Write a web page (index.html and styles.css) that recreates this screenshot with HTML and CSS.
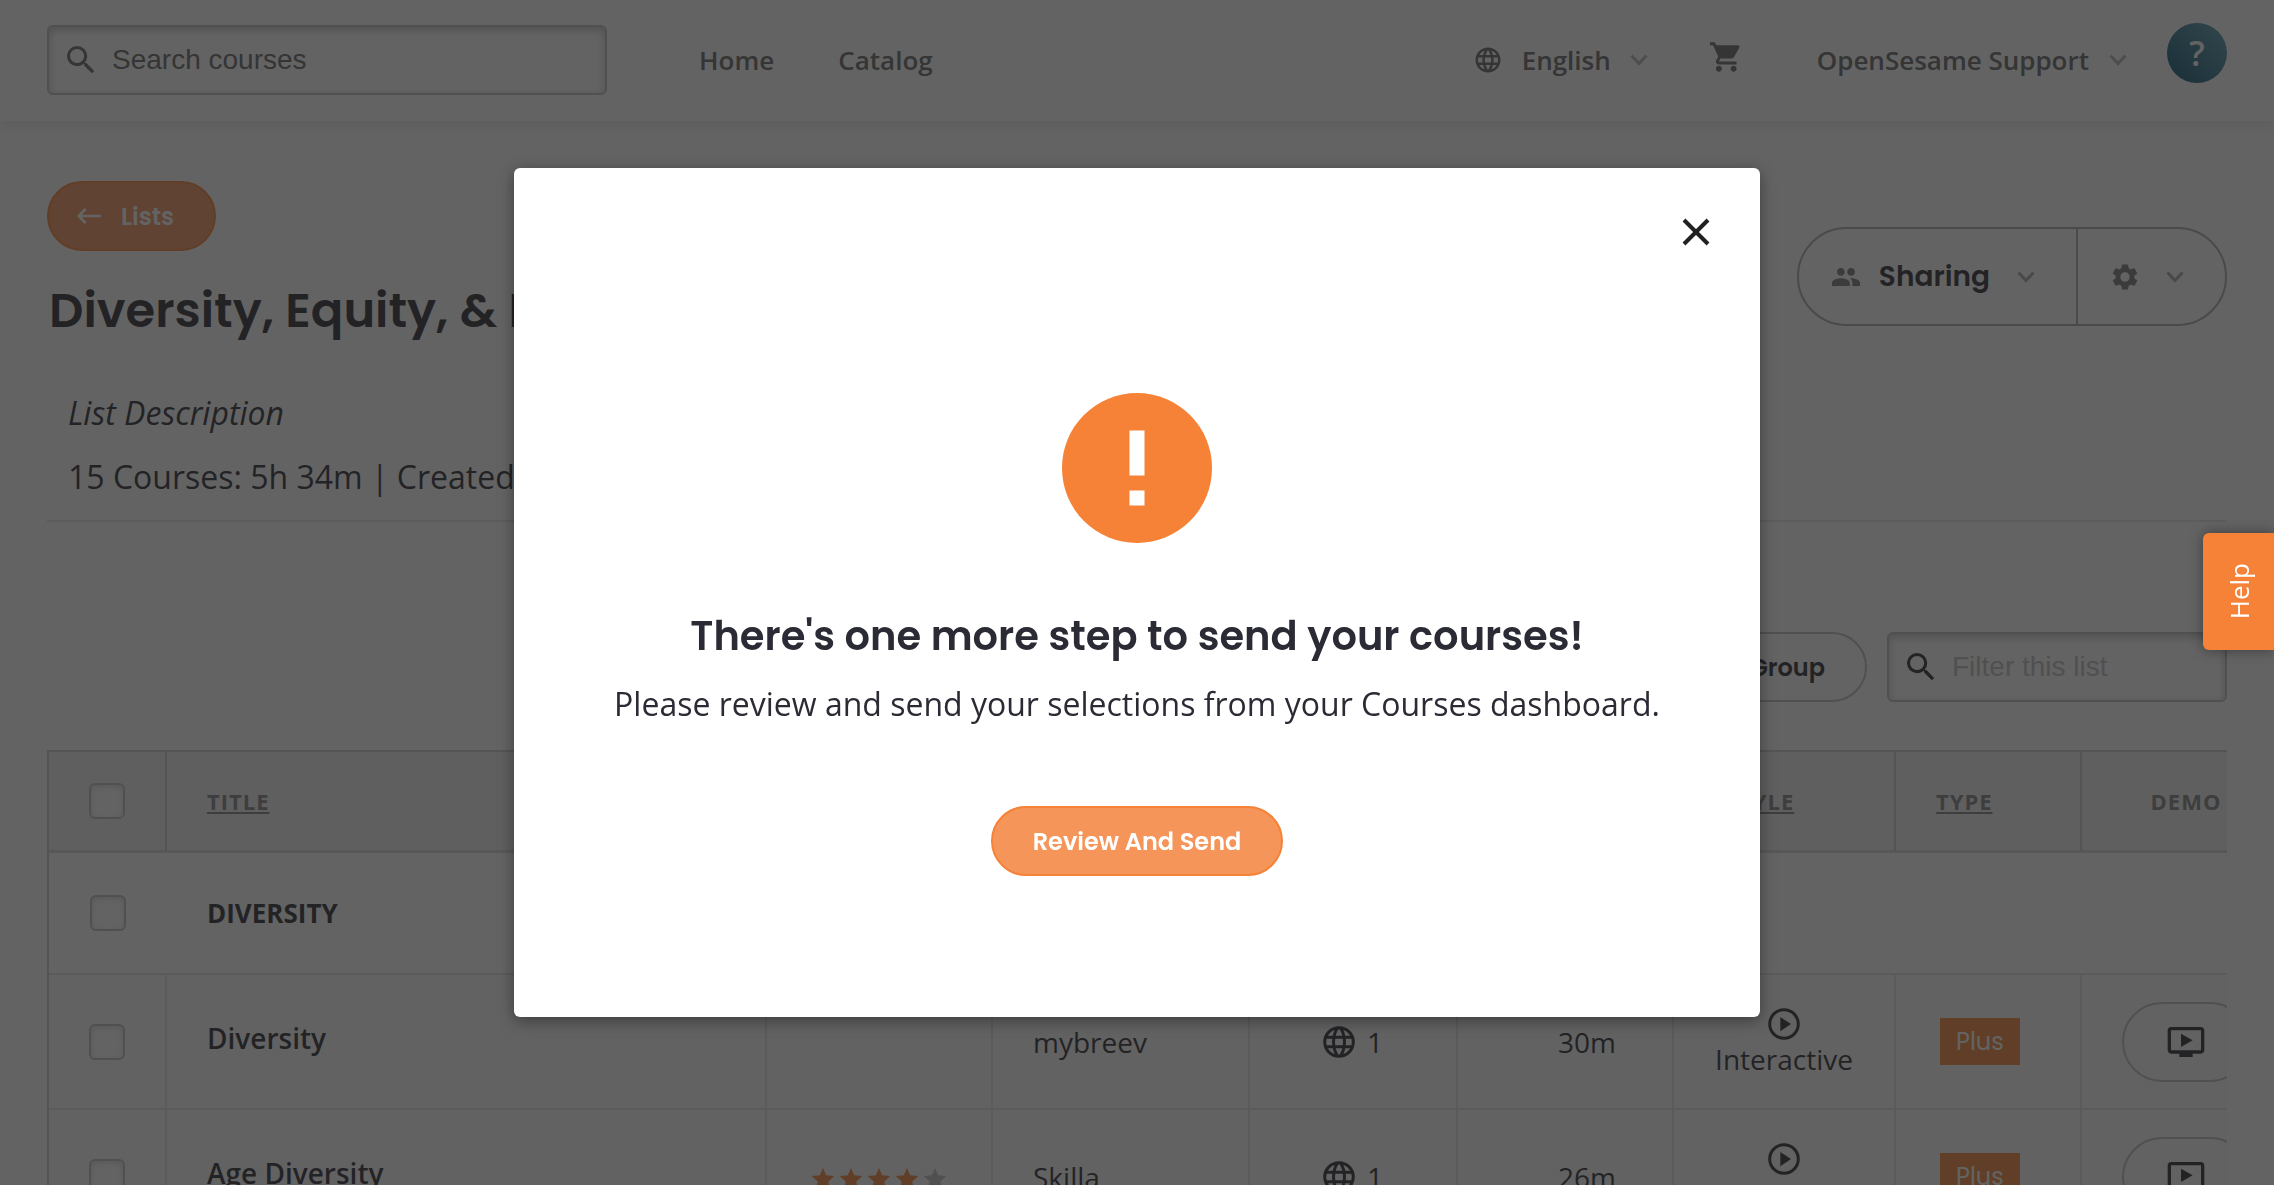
FILE: index.html
```html
<!DOCTYPE html>
<html lang="en">
<head>
  <meta charset="UTF-8" />
  <meta name="viewport" content="width=device-width, initial-scale=1.0" />
  <title>Diversity, Equity, &amp; Inclusion</title>
  <link rel="stylesheet" href="styles.css">
</head>
<body>
  <!-- shared icons -->
  <svg class="sprite" aria-hidden="true">
    <symbol id="search" viewBox="3 3 18 18"><path d="M15.5 14h-.79l-.28-.27A6.471 6.471 0 0 0 16 9.5 6.5 6.5 0 1 0 9.5 16c1.61 0 3.09-.59 4.23-1.57l.27.28v.79l5 4.99L20.49 19l-4.99-5zm-6 0C7.01 14 5 11.99 5 9.5S7.01 5 9.5 5 14 7.01 14 9.5 11.99 14 9.5 14z"/></symbol>
    <symbol id="chevron" viewBox="0 0 18 12"><path d="M1.5 1.5L9 9.5l7.5-8" fill="none" stroke="currentColor" stroke-width="3"/></symbol>
    <symbol id="globe" viewBox="0 0 24 24"><path d="M11.99 2C6.47 2 2 6.48 2 12s4.47 10 9.99 10C17.52 22 22 17.52 22 12S17.52 2 11.99 2zm6.93 6h-2.95c-.32-1.25-.78-2.45-1.38-3.56 1.84.63 3.37 1.91 4.33 3.56zM12 4.04c.83 1.2 1.48 2.53 1.91 3.96h-3.82c.43-1.43 1.08-2.76 1.91-3.96zM4.26 14C4.1 13.36 4 12.69 4 12s.1-1.36.26-2h3.38c-.08.66-.14 1.32-.14 2 0 .68.06 1.34.14 2H4.26zm.82 2h2.95c.32 1.25.78 2.45 1.38 3.56-1.84-.63-3.37-1.9-4.33-3.56zm2.95-8H5.08c.96-1.66 2.49-2.93 4.33-3.56C8.81 5.55 8.35 6.75 8.03 8zM12 19.96c-.83-1.2-1.48-2.53-1.91-3.96h3.82c-.43 1.43-1.08 2.76-1.91 3.96zM14.34 14H9.66c-.09-.66-.16-1.32-.16-2 0-.68.07-1.35.16-2h4.68c.09.65.16 1.32.16 2 0 .68-.07 1.34-.16 2zm.25 5.56c.6-1.11 1.06-2.31 1.38-3.56h2.95c-.96 1.65-2.49 2.93-4.33 3.56zM16.36 14c.08-.66.14-1.32.14-2 0-.68-.06-1.34-.14-2h3.38c.16.64.26 1.31.26 2s-.1 1.36-.26 2h-3.38z"/></symbol>
    <symbol id="globe-bold" viewBox="0 0 32 32"><g fill="none" stroke="currentColor" stroke-width="3"><circle cx="16" cy="16" r="14.3"/><path d="M3 11.3h26M3 20.7h26M14.5 2c-5.3 8-5.3 20 0 28M17.5 2c5.3 8 5.3 20 0 28"/></g></symbol>
    <symbol id="play" viewBox="0 0 32 32"><circle cx="16" cy="16" r="14.3" fill="none" stroke="currentColor" stroke-width="3"/><path d="M12.3 9v14.2L23 16z"/></symbol>
    <symbol id="demo" viewBox="0 0 24 24"><path d="M21 3H3c-1.11 0-2 .89-2 2v12c0 1.1.89 2 2 2h5v2h8v-2h5c1.1 0 1.99-.9 1.99-2L23 5c0-1.11-.9-2-2-2zm0 14H3V5h18v12zm-5-6l-7 4V7z"/></symbol>
    <symbol id="star" viewBox="0 0 24 24"><path d="M12 1l3.2 7.2 8.1.8-6 5.600 1.700 8.200L12 18.800l-7 4 1.700-8.200L.7 9l8.100-.8z"/></symbol>
  </svg>

  <header class="topbar">
    <div class="search">
      <svg class="search-icon"><use href="#search"/></svg>
      <input type="text" aria-label="Search courses" placeholder="Search courses" />
    </div>
    <nav class="nav">
      <a href="#">Home</a>
      <a href="#">Catalog</a>
    </nav>
    <div class="tools">
      <button class="menu language">
        <svg class="globe"><use href="#globe"/></svg>
        English
        <svg class="chevron"><use href="#chevron"/></svg>
      </button>
      <button class="menu cart" aria-label="Cart">
        <svg viewBox="1 2 21 20"><path d="M7 18c-1.100 0-1.990.9-1.990 2S5.900 22 7 22s2-.9 2-2-.9-2-2-2zM1 2v2h2l3.600 7.590-1.350 2.450c-.16.28-.25.61-.25.96 0 1.100.9 2 2 2h12v-2H7.420c-.14 0-.25-.11-.25-.25l.03-.12.900-1.630h7.450c.75 0 1.410-.41 1.750-1.030l3.580-6.490A1 1 0 0 0 20 4H5.210l-.94-2H1zm16 16c-1.100 0-1.990.9-1.990 2s.89 2 1.990 2 2-.9 2-2-.9-2-2-2z"/></svg>
      </button>
      <button class="menu account">
        OpenSesame Support
        <svg class="chevron"><use href="#chevron"/></svg>
      </button>
      <button class="avatar">?</button>
    </div>
  </header>

  <main class="page">
    <section class="page-head">
      <div class="page-info">
        <button class="btn btn-back">
          <svg viewBox="0 0 24 16"><path d="M8.500 1L1.800 8l6.700 7M2 8h22" fill="none" stroke="currentColor" stroke-width="2.600"/></svg>
          Lists
        </button>
        <h1>Diversity, Equity, &amp; Inclusion</h1>
        <p class="description">List Description</p>
        <p class="meta">15 Courses: 5h 34m | Created by OpenSesame</p>
      </div>
      <div class="split">
        <button class="sharing">
          <svg class="people" viewBox="1 5 22 14"><path d="M16 11c1.660 0 2.990-1.340 2.990-3S17.660 5 16 5s-3 1.340-3 3 1.340 3 3 3zm-8 0c1.660 0 2.990-1.340 2.990-3S9.660 5 8 5 5 6.340 5 8s1.340 3 3 3zm0 2c-2.330 0-7 1.170-7 3.500V19h14v-2.500c0-2.330-4.670-3.500-7-3.500zm8 0c-.29 0-.62.02-.97.05 1.160.84 1.970 1.970 1.970 3.450V19h6v-2.500c0-2.330-4.670-3.500-7-3.500z"/></svg>
          Sharing
          <svg class="chevron"><use href="#chevron"/></svg>
        </button>
        <button class="settings" aria-label="Settings">
          <svg class="gear" viewBox="2 2 20 20"><path d="M19.140 12.940c.04-.3.06-.61.06-.94 0-.32-.02-.64-.07-.94l2.030-1.580a.49.49 0 0 0 .12-.61l-1.920-3.320a.488.488 0 0 0-.59-.22l-2.390.96c-.5-.38-1.030-.7-1.620-.94l-.36-2.540a.484.484 0 0 0-.48-.41h-3.840c-.24 0-.43.17-.47.41l-.36 2.540c-.59.24-1.130.57-1.620.94l-2.390-.96c-.22-.08-.47 0-.59.22L2.740 8.870c-.12.21-.08.47.12.61l2.030 1.580c-.05.3-.09.63-.09.94s.02.64.07.94l-2.030 1.580a.49.49 0 0 0-.12.61l1.920 3.320c.12.22.37.29.59.22l2.390-.96c.5.38 1.030.7 1.620.94l.36 2.540c.05.24.24.41.48.41h3.840c.24 0 .44-.17.47-.41l.36-2.540c.59-.24 1.130-.56 1.620-.94l2.390.96c.22.08.47 0 .59-.22l1.920-3.320c.12-.22.07-.47-.12-.61l-2.010-1.580zM12 15.600c-1.980 0-3.600-1.620-3.600-3.600s1.620-3.600 3.600-3.600 3.600 1.620 3.600 3.600-1.620 3.600-3.600 3.600z"/></svg>
          <svg class="chevron"><use href="#chevron"/></svg>
        </button>
      </div>
    </section>

    <div class="toolbar">
      <button class="btn btn-outline">Add Group</button>
      <div class="search filter">
        <svg class="search-icon"><use href="#search"/></svg>
        <input type="text" aria-label="Filter this list" placeholder="Filter this list" />
      </div>
    </div>

    <div class="table-wrap">
      <table>
        <colgroup>
          <col class="col-check"><col><col class="col-rating"><col class="col-provider"><col class="col-lang"><col class="col-time"><col class="col-style"><col class="col-type"><col class="col-demo">
        </colgroup>
        <thead>
          <tr>
            <th class="check"><input type="checkbox" aria-label="Select all" /></th>
            <th><a href="#">TITLE</a></th>
            <th><a href="#">RATING</a></th>
            <th><a href="#">PROVIDER</a></th>
            <th><a href="#">LANG</a></th>
            <th><a href="#">TIME</a></th>
            <th class="style-head"><a href="#">STYLE</a></th>
            <th><a href="#">TYPE</a></th>
            <th class="center">DEMO</th>
          </tr>
        </thead>
        <tbody>
          <tr class="group">
            <td class="check"><input type="checkbox" aria-label="Select Diversity group" /></td>
            <td colspan="8">DIVERSITY</td>
          </tr>
          <tr class="course">
            <td class="check"><input type="checkbox" aria-label="Select Diversity" /></td>
            <td class="title">Diversity</td>
            <td></td>
            <td>mybreev</td>
            <td class="center"><span class="lang"><svg><use href="#globe-bold"/></svg>1</span></td>
            <td class="time">30m</td>
            <td class="style"><svg><use href="#play"/></svg>Interactive</td>
            <td><span class="tag">Plus</span></td>
            <td class="demo"><button aria-label="Play demo"><svg><use href="#demo"/></svg></button></td>
          </tr>
          <tr class="course">
            <td class="check"><input type="checkbox" aria-label="Select Age Diversity" /></td>
            <td class="title">Age Diversity</td>
            <td class="rating"><div class="stars"><svg><use href="#star"/></svg><svg><use href="#star"/></svg><svg><use href="#star"/></svg><svg><use href="#star"/></svg><svg class="off"><use href="#star"/></svg></div></td>
            <td>Skilla</td>
            <td class="center"><span class="lang"><svg><use href="#globe-bold"/></svg>1</span></td>
            <td class="time">26m</td>
            <td class="style"><svg><use href="#play"/></svg>Interactive</td>
            <td><span class="tag">Plus</span></td>
            <td class="demo"><button aria-label="Play demo"><svg><use href="#demo"/></svg></button></td>
          </tr>
        </tbody>
      </table>
    </div>
  </main>

  <div class="backdrop">
    <div class="modal" role="dialog" aria-modal="true" aria-labelledby="modal-title">
      <button class="close" aria-label="Close">
        <svg viewBox="0 0 28 28"><path d="M2 2l24 24M26 2L2 26" fill="none" stroke="currentColor" stroke-width="4"/></svg>
      </button>
      <svg class="alert" viewBox="2 2 20 20"><circle cx="12" cy="12" r="10"/><path d="M11 7h2v6h-2zM11 15h2v2h-2z" fill="#fff"/></svg>
      <h2 id="modal-title">There's one more step to send your courses!</h2>
      <p>Please review and send your selections from your Courses dashboard.</p>
      <button class="btn">Review And Send</button>
    </div>
  </div>

  <button class="help">Help</button>
</body>
</html>
```
FILE: styles.css
```css
* {
  box-sizing: border-box;
}
body {
  margin: 0;
  height: 100vh;
  overflow: hidden;
  background-color: #fff;
  color: #2b2b35;
  font-family: "Open Sans", sans-serif;
  font-size: 28px;
}
svg {
  fill: currentColor;
  flex-shrink: 0;
}
a {
  color: inherit;
  text-decoration: none;
}
h1, h2, p {
  margin: 0;
}
button {
  font: inherit;
  color: inherit;
  background: none;
  border: none;
  padding: 0;
  cursor: pointer;
}
.sprite {
  display: none;
}
.chevron {
  width: 18px;
  height: 12px;
  color: #a8a8a8;
}

/* top bar */
.topbar {
  display: flex;
  align-items: center;
  height: 121px;
  padding: 0 47px 2px;
  box-shadow: 0 2px 14px rgba(0, 0, 0, 0.12);
  color: #646464;
  font-size: 26px;
  font-weight: 600;
}
.topbar .chevron {
  color: #b4b4b4;
}
.search {
  display: flex;
  align-items: center;
  width: 560px;
  height: 70px;
  padding: 0 18px;
  gap: 17px;
  border: 2px solid #bebebe;
  border-radius: 6px;
  box-shadow: inset 0 3px 8px rgba(0, 0, 0, 0.25);
}
.search-icon {
  width: 28px;
  height: 28px;
}
.search input {
  flex: 1;
  min-width: 0;
  border: none;
  outline: none;
  padding: 0;
  background: none;
  font-family: "Liberation Sans", Arial, sans-serif;
  font-size: 28px;
}
.search input::placeholder {
  color: #646464;
}
.nav {
  display: flex;
  gap: 64px;
  margin-left: 92px;
}
.tools {
  display: flex;
  align-items: center;
  margin-left: auto;
}
.menu {
  display: flex;
  align-items: center;
  gap: 20px;
}
.language {
  gap: 19px;
}
.globe {
  width: 30px;
  height: 30px;
}
.cart {
  margin: 0 76px 6px 62px;
}
.cart svg {
  width: 31px;
  height: 30px;
}
.avatar {
  width: 60px;
  height: 60px;
  margin: 0 0 14px 40px;
  border-radius: 50%;
  background: linear-gradient(45deg, #0a4f6c, #5aa0b4);
  color: #fff;
  font-size: 34px;
}

/* list header */
.page {
  padding: 60px 47px 0;
}
.page-head {
  display: flex;
  justify-content: space-between;
  padding-bottom: 21px;
  border-bottom: 2px solid #e8e8e8;
}
.btn {
  display: inline-flex;
  align-items: center;
  height: 70px;
  padding: 0 40px;
  border: 2px solid #f58236;
  border-radius: 35px;
  background-color: #f5955a;
  color: #fff;
  font-family: Poppins, Inter, sans-serif;
  font-size: 24px;
  font-weight: 600;
}
.btn-back {
  gap: 20px;
  padding: 0 40px 0 28px;
}
.btn-back svg {
  width: 24px;
  height: 16px;
}
h1 {
  margin-top: 24px;
  padding-left: 2px;
  font-family: Poppins, Inter, sans-serif;
  font-size: 48px;
  line-height: 72px;
  font-weight: 600;
}
.description, .meta {
  padding-left: 21px;
  font-size: 32px;
  line-height: 44px;
}
.description {
  margin-top: 44px;
  font-style: italic;
}
.meta {
  margin-top: 20px;
}
.split {
  display: flex;
  height: 99px;
  margin-top: 46px;
  border: 2px solid #aaa;
  border-radius: 50px;
  font-family: Poppins, Inter, sans-serif;
  font-weight: 600;
}
.split button {
  display: flex;
  align-items: center;
}
.split .sharing {
  gap: 19px;
  padding: 0 41px 0 33px;
  border-right: 2px solid #aaa;
}
.sharing .chevron {
  margin-left: 8px;
}
.split .settings {
  gap: 28px;
  padding: 0 41px 0 34px;
}
.people, .gear {
  color: #787878;
}
.people {
  width: 28px;
  height: 18px;
}
.gear {
  width: 26px;
  height: 26px;
}

/* toolbar */
.toolbar {
  display: flex;
  justify-content: flex-end;
  gap: 20px;
  margin-top: 110px;
}
.btn-outline {
  border-color: #bebebe;
  background: none;
  color: #2b2b35;
}
.filter {
  width: 340px;
}
.filter input::placeholder {
  color: #bebebe;
}

/* courses table */
.table-wrap {
  margin-top: 48px;
  overflow: hidden;
}
table {
  width: calc(100% + 65px);
  table-layout: fixed;
  border-collapse: separate;
  border-spacing: 0;
  border-left: 2px solid #cdcdcd;
}
.col-check { width: 118px; }
.col-rating { width: 226px; }
.col-provider { width: 257px; }
.col-lang { width: 208px; }
.col-time { width: 216px; }
.col-style { width: 222px; }
.col-type { width: 186px; }
.col-demo { width: 210px; }
th, td {
  padding: 0 40px;
  border-right: 2px solid #e4e4e4;
  border-bottom: 2px solid #e4e4e4;
  text-align: left;
}
th {
  height: 103px;
  background-color: #f1f1f1;
  border-top: 2px solid #cdcdcd;
  border-bottom: 3px solid #d8d8d8;
  border-right-color: #cdcdcd;
  color: #828282;
  font-size: 22px;
  letter-spacing: 1px;
}
th a {
  text-decoration: underline;
}
th.style-head {
  padding-left: 52px;
}
.group td {
  height: 122px;
  border-right: none;
  font-size: 26px;
  font-weight: 700;
}
.course td {
  height: 135px;
  background-color: #fcfcfc;
}
td.title {
  padding-bottom: 8px;
  font-weight: 600;
}
th.check, td.check {
  padding: 0;
  text-align: center;
}
th.center, td.center {
  padding: 0;
  text-align: center;
}
input[type="checkbox"] {
  appearance: none;
  display: block;
  width: 36px;
  height: 36px;
  margin: 0 auto;
  border: 2px solid #bebebe;
  border-radius: 6px;
  background-color: #fff;
  box-shadow: inset 0 2px 6px rgba(0, 0, 0, 0.15);
}
.lang {
  display: inline-flex;
  align-items: center;
  gap: 12px;
  padding-top: 6px;
}
.lang svg, .style svg {
  width: 32px;
  height: 32px;
}
td.time {
  padding-right: 56px;
  text-align: right;
}
td.style {
  padding: 3px 0 0;
  text-align: center;
  line-height: 38px;
}
.style svg {
  display: block;
  margin: 0 auto;
}
.tag {
  display: inline-block;
  margin-left: 4px;
  padding: 0 16px;
  background-color: #f58236;
  color: #fff;
  font-family: Poppins, Inter, sans-serif;
  font-size: 24px;
  line-height: 47px;
}
.stars {
  display: flex;
  gap: 4px;
  margin-left: 4px;
  padding-top: 4px;
  color: #f58236;
}
.stars svg {
  width: 24px;
  height: 24px;
}
.stars .off {
  color: #bebebe;
}
td.demo {
  padding: 0;
}
.demo button {
  display: flex;
  align-items: center;
  justify-content: center;
  width: 128px;
  height: 80px;
  margin: 0 auto;
  border: 2px solid #bebebe;
  border-radius: 40px;
}
.demo svg {
  width: 40px;
  height: 40px;
}

/* modal */
.backdrop {
  position: fixed;
  inset: 0;
  display: flex;
  align-items: center;
  justify-content: center;
  background-color: rgba(33, 33, 33, 0.7);
}
.modal {
  display: flex;
  flex-direction: column;
  align-items: center;
  width: 90%;
  max-width: 1246px;
  padding: 50px 50px 141px;
  border-radius: 6px;
  background-color: #fff;
  box-shadow: 0 4px 16px rgba(0, 0, 0, 0.4);
  text-align: center;
}
.close {
  align-self: flex-end;
  width: 28px;
  height: 28px;
  color: #212121;
}
.close svg, .alert {
  display: block;
}
.alert {
  width: 150px;
  height: 150px;
  margin-top: 147px;
  color: #f58236;
}
.modal h2 {
  margin-top: 63px;
  font-family: Poppins, Inter, sans-serif;
  font-size: 40px;
  line-height: 60px;
  font-weight: 600;
}
.modal p {
  margin-top: 16px;
  font-size: 32px;
  line-height: 44px;
}
.modal .btn {
  margin-top: 80px;
}

/* help tab */
.help {
  position: fixed;
  right: 0;
  top: 533px;
  width: 71px;
  height: 117px;
  border-radius: 6px 0 0 6px;
  background-color: #f58236;
  box-shadow: 0 0 14px rgba(0, 0, 0, 0.4);
  color: #fff;
  font-size: 26px;
  writing-mode: sideways-lr;
}
```
